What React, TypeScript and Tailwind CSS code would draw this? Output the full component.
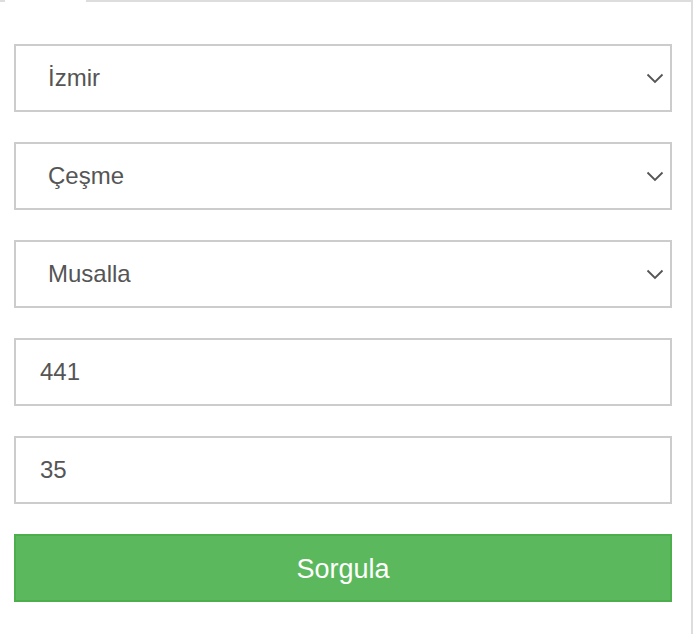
const selects = ["İzmir", "Çeşme", "Musalla"];
const inputs = ["441", "35"];

function Chevron() {
  return (
    <svg width="18" height="11" viewBox="0 0 18 11" fill="none" className="shrink-0">
      <path d="M1.5 1.5 L9 9 L16.5 1.5" stroke="#555" strokeWidth="1.8" />
    </svg>
  );
}

export default function App() {
  return (
    <div className="w-[694px] h-[634px] bg-white font-['Liberation_Sans',Arial,sans-serif]">
      {/* tab strip edge */}
      <div className="flex h-[2px] pr-[1px]">
        <div className="w-[5px] bg-[#ddd]" />
        <div className="w-[81px]" />
        <div className="flex-1 bg-[#ddd]" />
      </div>

      <div className="h-[632px] mr-[1px] border-r-2 border-[#ddd] pt-[42px] pl-[14px] pr-[19px] flex flex-col gap-[30px]">
        {selects.map((s) => (
          <div
            key={s}
            className="h-[68px] border-2 border-[#ccc] flex items-center pl-[32px] pr-[6px] text-[24px] text-[#555]"
          >
            <span className="flex-1">{s}</span>
            <Chevron />
          </div>
        ))}

        {inputs.map((v) => (
          <div
            key={v}
            className="h-[68px] border-2 border-[#ccc] flex items-center pl-[24px] text-[24px] text-[#555]"
          >
            {v}
          </div>
        ))}

        <button className="h-[68px] bg-[#5cb85c] border-2 border-[#4cae4c] text-white text-[27px] flex items-center justify-center pt-[3px]">
          Sorgula
        </button>
      </div>
    </div>
  );
}
